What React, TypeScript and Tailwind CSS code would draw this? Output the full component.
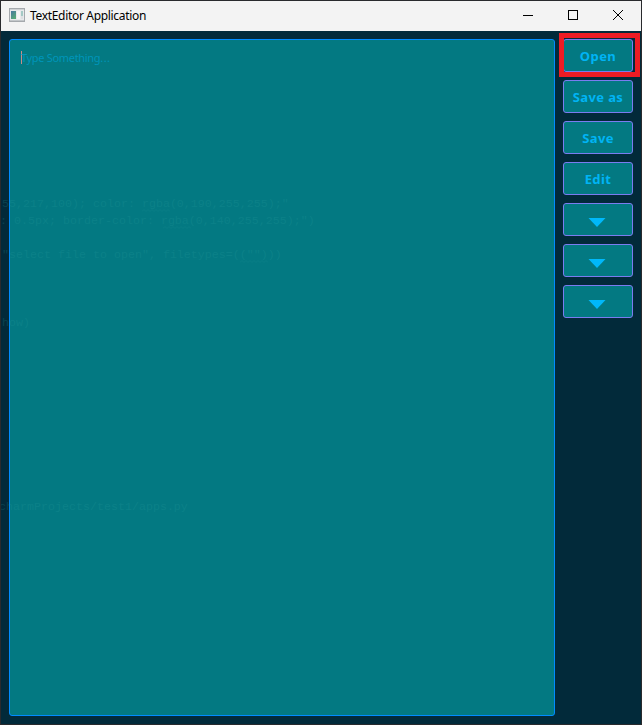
import React from 'react';

const ghostLines = [
  { text: '55,217,100); color: rgba(0,190,255,255);"', place: 'left-[1px] top-[196px]' },
  { text: ': 0.5px; border-color: rgba(0,140,255,255);")', place: 'left-[-1px] top-[213px]' },
  { text: '"select file to open", filetypes=(("")))', place: 'left-[1px] top-[247px]' },
  { text: 'how)', place: 'left-[1px] top-[315px]' },
  { text: 'charmProjects/test1/apps.py', place: 'left-[-2px] top-[499px]' },
];

const squiggles = [
  'left-[141px] top-[208px]',
  'left-[162px] top-[225px]',
  'left-[239px] top-[259px]',
];

function AppIcon() {
  return (
    <svg width="16" height="14" viewBox="0 0 16 14" shapeRendering="crispEdges">
      <defs>
        <linearGradient id="pane" x1="0" y1="0" x2="0.6" y2="1">
          <stop offset="0" stopColor="#4778a0" />
          <stop offset="1" stopColor="#55a878" />
        </linearGradient>
      </defs>
      <rect width="16" height="14" fill="#a5a9ad" />
      <rect x="1" y="1" width="14" height="1" fill="#cfd2d4" />
      <rect x="1" y="2" width="14" height="10" fill="#e7e9eb" />
      <rect x="2" y="3" width="5" height="8" fill="url(#pane)" />
      <rect x="8" y="3" width="3" height="8" fill="#f5f5f5" />
      <rect x="12" y="3" width="2" height="5" fill="#a4c9c5" />
      <rect x="12" y="8" width="2" height="3" fill="#dedfe2" />
      <rect x="1" y="12" width="14" height="1" fill="#c3c7ca" />
    </svg>
  );
}

function SideButton({ children }: { children: React.ReactNode }) {
  return (
    <button className="flex h-[33px] w-[70px] shrink-0 items-center justify-center rounded-[3px] border border-[#7a7cf0] bg-[#037982] pt-px text-[13px] leading-4 font-bold tracking-[0.4px] whitespace-nowrap text-[#00b4f5]">
      {children}
    </button>
  );
}

function Arrow() {
  return (
    <svg width="18" height="9" viewBox="0 0 18 9" className="mt-[4px] mr-[2px]">
      <path d="M0.5 0H17.5L9 9Z" fill="#00b8fa" />
    </svg>
  );
}

export default function App() {
  return (
    <div className="relative flex h-[725px] w-[642px] flex-col overflow-hidden border border-[#292a2d] bg-[#022a3a] font-['Noto_Sans',sans-serif]">
      <header className="flex h-[30px] shrink-0 items-center bg-[#f3f3f3] text-black">
        <div className="ml-2 mt-[-2px]"><AppIcon /></div>
        <h1 className="ml-[5px] w-[130px] text-[12px] leading-4 font-normal tracking-[-0.32px] whitespace-nowrap">TextEditor Application</h1>
        <div className="mt-[-2px] mr-[18px] ml-auto flex items-center gap-[35px]">
          <svg width="10" height="10" viewBox="0 0 10 10" shapeRendering="crispEdges"><path d="M0 5.5H10" stroke="currentColor" /></svg>
          <svg width="10" height="10" viewBox="0 0 10 10" shapeRendering="crispEdges"><path d="M.5 .5H9.5V9.5H.5Z" fill="none" stroke="currentColor" /></svg>
          <svg width="10" height="10" viewBox="0 0 10 10"><path d="M0 0L10 10M10 0L0 10" stroke="currentColor" /></svg>
        </div>
      </header>

      <main className="flex min-h-0 flex-1 gap-2 p-2">
        <section className="flex w-[546px] shrink-0 items-start rounded-[3px] border border-[#008cff] bg-[#037982] pt-[11px] pl-[11px]">
          <span className="h-[13px] w-px bg-[#c78c8a]" />
          <span className="ml-[-1px] text-[11px] leading-[14px] tracking-[-0.32px] text-[#0095b9]">Type Something<span className="tracking-[0.5px]">...</span></span>
        </section>
        <nav className="flex flex-col gap-2">
          <SideButton>Open</SideButton>
          <SideButton>Save as</SideButton>
          <SideButton>Save</SideButton>
          <SideButton>Edit</SideButton>
          <SideButton><Arrow /></SideButton>
          <SideButton><Arrow /></SideButton>
          <SideButton><Arrow /></SideButton>
        </nav>
      </main>

      <div className="pointer-events-none absolute inset-0 font-['Liberation_Mono',monospace] text-[11.667px] leading-[14px] text-[#2ca0a0] opacity-20">
        {ghostLines.map((line) => (
          <span key={line.text} className={`absolute whitespace-pre ${line.place}`}>{line.text}</span>
        ))}
        {squiggles.map((place) => (
          <svg key={place} width="28" height="3" viewBox="0 0 28 3" className={`absolute ${place}`}>
            <path d="M0 2.5L2 .5L4 2.5L6 .5L8 2.5L10 .5L12 2.5L14 .5L16 2.5L18 .5L20 2.5L22 .5L24 2.5L26 .5L28 2.5" fill="none" stroke="currentColor" strokeWidth="0.8" />
          </svg>
        ))}
      </div>
      <div className="pointer-events-none absolute top-[32px] left-[558px] h-[44px] w-[81px] border-[5px] border-[#ed1c24]" />
    </div>
  );
}
